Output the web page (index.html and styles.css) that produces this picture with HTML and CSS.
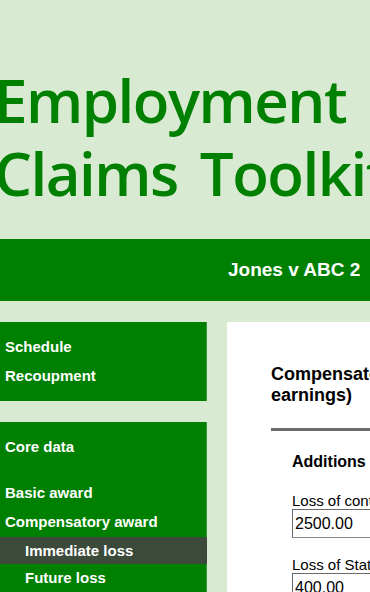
FILE: index.html
```html
<!DOCTYPE html>
<html lang="en">
<head>
<meta charset="utf-8">
<title>Employment Claims Toolkit</title>
<link rel="stylesheet" href="styles.css">
</head>
<body>
<div class="page">
  <header class="masthead">
    <h1 class="title">Employment<br>Claims Toolkit</h1>
  </header>
  <div class="casebar">
    <span class="casename">Jones v ABC 2</span>
  </div>
  <div class="main">
    <nav class="sidebar">
      <ul class="navbox">
        <li class="navitem">Schedule</li>
        <li class="navitem">Recoupment</li>
      </ul>
      <ul class="navbox">
        <li class="navitem">Core data</li>
        <li class="navitem navitem-spaced">Basic award</li>
        <li class="navitem">Compensatory award</li>
        <li class="subitem subitem-active">Immediate loss</li>
        <li class="subitem">Future loss</li>
      </ul>
    </nav>
    <section class="panel">
      <h2 class="panel-title">Compensatory award (loss of earnings)</h2>
      <div class="rule"></div>
      <div class="group">
        <h3 class="group-title">Additions</h3>
        <label class="field">
          <span class="field-label">Loss of contractual earnings</span>
          <input class="field-input" type="text" value="2500.00">
        </label>
        <label class="field">
          <span class="field-label">Loss of Statutory rights</span>
          <input class="field-input" type="text" value="400.00">
        </label>
      </div>
    </section>
  </div>
</div>
</body>
</html>
```
FILE: styles.css
```css
html {
  overflow: hidden;
}
body {
  margin: 0;
  background: #d9ead3;
  font-family: "Liberation Sans", Arial, sans-serif;
}
.page {
  width: 900px;
}
.masthead {
  padding: 64px 0 29px 0;
}
.title {
  margin: 0 0 0 -6px;
  font-family: "Open Sans", sans-serif;
  font-weight: 600;
  font-size: 60px;
  line-height: 73px;
  letter-spacing: -1.5px;
  word-spacing: 8px;
  color: #008000;
  white-space: nowrap;
}
.casebar {
  height: 62px;
  background: #008000;
  display: flex;
  align-items: center;
  padding-left: 228px;
}
.casename {
  color: #fff;
  font-weight: bold;
  font-size: 19px;
}
.main {
  display: flex;
  gap: 20px;
  padding-top: 21px;
  align-items: flex-start;
}
.sidebar {
  width: 207px;
  flex: 0 0 207px;
  display: flex;
  flex-direction: column;
  gap: 21px;
}
.navbox {
  list-style: none;
  margin: 0;
  padding: 10px 0 11px 0;
  background: #008000;
  box-shadow: inset -1px 0 0 #3a9a3a;
}
.navitem {
  color: #fff;
  font-weight: bold;
  font-size: 15px;
  line-height: 29px;
  padding-left: 5px;
}
.navitem-spaced {
  margin-top: 17px;
}
.subitem {
  color: #fff;
  font-weight: bold;
  font-size: 15px;
  line-height: 27px;
  padding-left: 25px;
}
.subitem-active {
  background: #3c4a3c;
  margin-top: 1px;
}
.panel {
  flex: 0 0 560px;
  background: #fff;
  padding: 42px 0 0 44px;
  min-height: 400px;
}
.panel-title {
  margin: 0;
  width: 300px;
  font-size: 18px;
  line-height: 21px;
  font-weight: bold;
  color: #000;
}
.rule {
  margin-top: 22px;
  border-top: 3px solid #6b6b6b;
  width: 480px;
}
.group {
  padding: 22px 0 0 21px;
}
.group-title {
  margin: 0 0 21px 0;
  font-size: 16px;
  font-weight: bold;
}
.field {
  display: flex;
  flex-direction: column;
  margin-bottom: 18px;
}
.field-label {
  font-size: 15px;
  line-height: 17px;
  color: #000;
}
.field-input {
  width: 200px;
  margin: 0;
  padding: 4px 2px;
  font-family: "Liberation Sans", Arial, sans-serif;
  font-size: 16px;
  line-height: 19px;
  border: 1px solid #8a8a8a;
  border-top-color: #6a6a6a;
  border-left-color: #6a6a6a;
  color: #000;
  background: #fff;
}
```
